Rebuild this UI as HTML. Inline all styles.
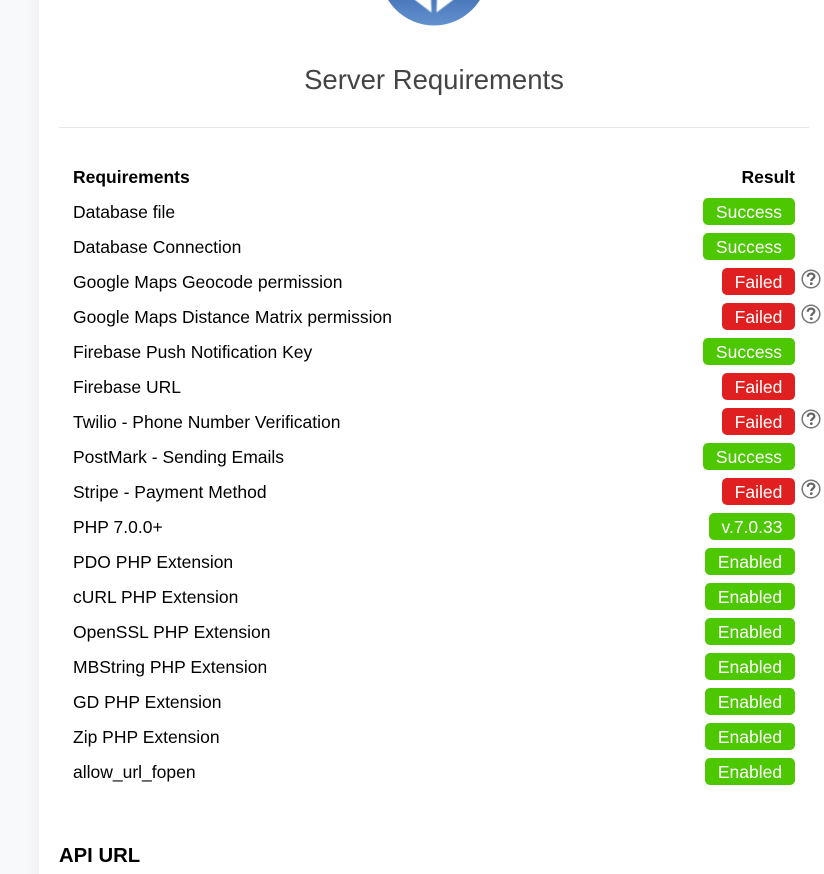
<!DOCTYPE html>
<html lang="en">
<head>
<meta charset="utf-8">
<title>Server Requirements</title>
<style>
html,body{margin:0;padding:0;background:#fff;}
body{width:824px;height:874px;position:relative;overflow:hidden;font-family:"Liberation Sans",sans-serif;color:#000;}
.side{position:absolute;left:0;top:0;width:39px;height:874px;background:linear-gradient(to right,#f8f9fb 0,#f8f9fb 26px,#f1f2f4 39px);}
h2{position:absolute;left:59px;width:750px;top:62px;margin:0;text-align:center;font-size:27.5px;line-height:36px;font-weight:400;color:#444;}
.hr{position:absolute;left:59px;top:127px;width:750px;height:1px;background:#e6e6e6;}
.l{position:absolute;left:73px;font-size:17.5px;line-height:29px;white-space:nowrap;}
.b{font-weight:700;}
.r{position:absolute;right:29px;font-size:17.5px;line-height:29px;white-space:nowrap;}
.t{position:absolute;right:29px;height:27px;line-height:29px;font-size:17.5px;color:#fff;border-radius:5px;text-align:center;}
.s{background:#4cc700;}
.f{background:#e02020;}
.q{position:absolute;left:801px;width:20px;height:20px;}
h3{position:absolute;left:59px;top:842px;margin:0;font-size:20.3px;line-height:28px;font-weight:700;}
</style>
</head>
<body>
<div class="side"></div>
<svg style="position:absolute;left:380px;top:0" width="108" height="28" viewBox="0 0 108 28">
<defs>
<linearGradient id="g" gradientUnits="userSpaceOnUse" x1="0" y1="0" x2="0" y2="26"><stop offset="0" stop-color="#4a78bc"/><stop offset="1" stop-color="#6492cf"/></linearGradient>
<filter id="bl" x="-20%" y="-20%" width="140%" height="140%"><feGaussianBlur stdDeviation="0.600"/></filter>
</defs>
<circle cx="54" cy="-28.500" r="54" fill="url(#g)"/>
<g filter="url(#bl)">
<path d="M31 -3H51L51.500 12.500Z" fill="#fff"/>
<path d="M77 -3H57L56.500 12.500Z" fill="#fff"/>
</g>
</svg>
<h2>Server Requirements</h2>
<div class="hr"></div>

<div class="l b" style="top:163px">Requirements</div><div class="r b" style="top:163px">Result</div>

<div class="l" style="top:198px">Database file</div><div class="t s" style="top:198px;width:92px">Success</div>
<div class="l" style="top:233px">Database Connection</div><div class="t s" style="top:233px;width:92px">Success</div>
<div class="l" style="top:268px">Google Maps Geocode permission</div><div class="t f" style="top:268px;width:73px">Failed</div>
<div class="l" style="top:303px">Google Maps Distance Matrix permission</div><div class="t f" style="top:303px;width:73px">Failed</div>
<div class="l" style="top:338px">Firebase Push Notification Key</div><div class="t s" style="top:338px;width:92px">Success</div>
<div class="l" style="top:373px">Firebase URL</div><div class="t f" style="top:373px;width:73px">Failed</div>
<div class="l" style="top:408px">Twilio - Phone Number Verification</div><div class="t f" style="top:408px;width:73px">Failed</div>
<div class="l" style="top:443px">PostMark - Sending Emails</div><div class="t s" style="top:443px;width:92px">Success</div>
<div class="l" style="top:478px">Stripe - Payment Method</div><div class="t f" style="top:478px;width:73px">Failed</div>
<div class="l" style="top:513px">PHP 7.0.0+</div><div class="t s" style="top:513px;width:86px">v.7.0.33</div>
<div class="l" style="top:548px">PDO PHP Extension</div><div class="t s" style="top:548px;width:90px">Enabled</div>
<div class="l" style="top:583px">cURL PHP Extension</div><div class="t s" style="top:583px;width:90px">Enabled</div>
<div class="l" style="top:618px">OpenSSL PHP Extension</div><div class="t s" style="top:618px;width:90px">Enabled</div>
<div class="l" style="top:653px">MBString PHP Extension</div><div class="t s" style="top:653px;width:90px">Enabled</div>
<div class="l" style="top:688px">GD PHP Extension</div><div class="t s" style="top:688px;width:90px">Enabled</div>
<div class="l" style="top:723px">Zip PHP Extension</div><div class="t s" style="top:723px;width:90px">Enabled</div>
<div class="l" style="top:758px">allow_url_fopen</div><div class="t s" style="top:758px;width:90px">Enabled</div>

<svg class="q" style="top:269px" viewBox="0 0 20 20"><circle cx="10" cy="10" r="8.800" fill="#fff" stroke="#777" stroke-width="1.500"/><path d="M6.800 7.800C6.800 5.600 8.300 4.600 10 4.600C11.900 4.600 13.300 5.800 13.300 7.400C13.300 9.500 10.300 9.600 10.300 12" fill="none" stroke="#666" stroke-width="2.300"/><circle cx="10.300" cy="14.600" r="1.400" fill="#666"/></svg>
<svg class="q" style="top:304px" viewBox="0 0 20 20"><circle cx="10" cy="10" r="8.800" fill="#fff" stroke="#777" stroke-width="1.500"/><path d="M6.800 7.800C6.800 5.600 8.300 4.600 10 4.600C11.900 4.600 13.300 5.800 13.300 7.400C13.300 9.500 10.300 9.600 10.300 12" fill="none" stroke="#666" stroke-width="2.300"/><circle cx="10.300" cy="14.600" r="1.400" fill="#666"/></svg>
<svg class="q" style="top:409px" viewBox="0 0 20 20"><circle cx="10" cy="10" r="8.800" fill="#fff" stroke="#777" stroke-width="1.500"/><path d="M6.800 7.800C6.800 5.600 8.300 4.600 10 4.600C11.900 4.600 13.300 5.800 13.300 7.400C13.300 9.500 10.300 9.600 10.300 12" fill="none" stroke="#666" stroke-width="2.300"/><circle cx="10.300" cy="14.600" r="1.400" fill="#666"/></svg>
<svg class="q" style="top:479px" viewBox="0 0 20 20"><circle cx="10" cy="10" r="8.800" fill="#fff" stroke="#777" stroke-width="1.500"/><path d="M6.800 7.800C6.800 5.600 8.300 4.600 10 4.600C11.900 4.600 13.300 5.800 13.300 7.400C13.300 9.500 10.300 9.600 10.300 12" fill="none" stroke="#666" stroke-width="2.300"/><circle cx="10.300" cy="14.600" r="1.400" fill="#666"/></svg>

<h3>API URL</h3>
</body>
</html>
